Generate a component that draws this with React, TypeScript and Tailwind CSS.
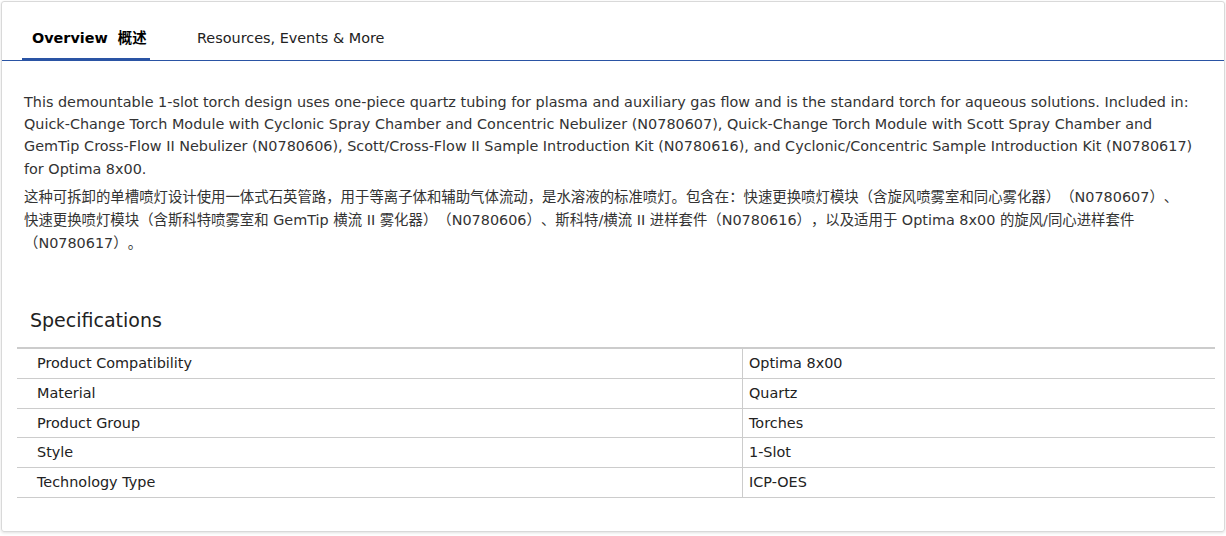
const specs = [
    { label: "Product Compatibility", value: "Optima 8x00" },
    { label: "Material", value: "Quartz" },
    { label: "Product Group", value: "Torches" },
    { label: "Style", value: "1-Slot" },
    { label: "Technology Type", value: "ICP-OES" },
];

export default function App() {
    const font = "font-['DejaVu_Sans','Noto_Sans_CJK_SC',sans-serif]";

    return (
        <div className={`bg-white p-px h-[536px] ${font} text-[#222] [text-spacing-trim:space-all]`}>
            <div className="border border-[#d9d9d9] rounded-[3px] shadow-[0_1px_3px_rgba(0,0,0,0.12)] h-[531px]">
                {/* tab strip */}
                <div className="flex border-b border-[#2a54a4] px-5">
                    <div className="w-[128px] whitespace-nowrap px-[10px] pt-[26px] pb-[8px] border-b-[3px] border-[#2a54a4] -mb-px text-[14.4px] font-bold text-black">
                        Overview&nbsp; 概述
                    </div>
                    <div className="ml-[47px] pt-[26px] pb-[8px] text-[14.4px] text-[#222]">
                        Resources, Events &amp; More
                    </div>
                </div>

                <div className="px-[22px] pt-[30px] text-[14.4px] leading-[22.4px] text-[#333]">
                    <p>
                        This demountable 1-slot torch design uses one-piece quartz tubing for plasma and auxiliary gas flow and is the standard torch for aqueous solutions. Included in: Quick-Change Torch Module with Cyclonic Spray Chamber and Concentric Nebulizer (N0780607), Quick-Change Torch Module with Scott Spray Chamber and GemTip Cross-Flow II Nebulizer (N0780606), Scott/Cross-Flow II Sample Introduction Kit (N0780616), and Cyclonic/Concentric Sample Introduction Kit (N0780617) for Optima 8x00.
                    </p>
                    <p className="mt-[6px] leading-[23px]">
                        这种可拆卸的单槽喷灯设计使用一体式石英管路，用于等离子体和辅助气体流动，是水溶液的标准喷灯。包含在：快速更换喷灯模块（含旋风喷雾室和同心雾化器）（N0780607）、<br />
                        快速更换喷灯模块（含斯科特喷雾室和 GemTip 横流 II 雾化器）（N0780606）、斯科特/横流 II 进样套件（N0780616），以及适用于 Optima 8x00 的旋风/同心进样套件<br />
                        （N0780617）。
                    </p>
                </div>

                <h3 className="px-[28px] mt-[51px] text-[19px] leading-[28px] font-medium text-[#222]">Specifications</h3>

                <div className="ml-[15px] mr-[9px] mt-[13px] border-t-2 border-[#cccccc]">
                    {specs.map(row =>
                        <div key={row.label} className="grid grid-cols-[726px_1fr] border-b border-[#cccccc] text-[14.4px] text-[#222]">
                            <div className="px-5 py-[4px] leading-[20.7px] border-r border-[#cccccc]">{row.label}</div>
                            <div className="px-[6px] py-[4px] leading-[20.7px]">{row.value}</div>
                        </div>
                    )}
                </div>
            </div>
        </div>
    )
}
